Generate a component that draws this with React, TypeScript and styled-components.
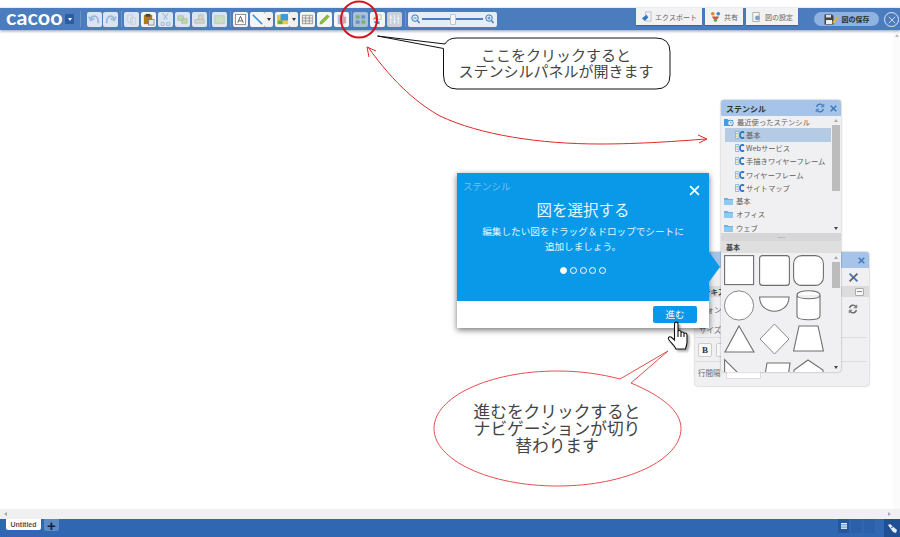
import styled, { createGlobalStyle } from 'styled-components'

const GlobalStyle = createGlobalStyle`
  html, body {
    margin: 0;
    padding: 0;
    background: #fff;
    font-family: 'Noto Sans CJK JP', 'Noto Sans', sans-serif;
  }
`

type GlyphName =
  | 'undo' | 'redo' | 'copy' | 'paste' | 'cut' | 'group' | 'ungroup' | 'frame'
  | 'text' | 'line' | 'image' | 'table' | 'pencil' | 'book' | 'stencil' | 'layers' | 'align'

const Glyph = ({ name }: { name: GlyphName }) => {
  const shapes: Record<GlyphName, React.ReactNode> = {
    undo: <path d="M3 7 C4 2 10 2 11 8 V11 M1 4 L3 8 L7 6" fill="none" stroke="#7fa3d3" strokeWidth="1.8" />,
    redo: <path d="M11 7 C10 2 4 2 3 8 V11 M13 4 L11 8 L7 6" fill="none" stroke="#7fa3d3" strokeWidth="1.8" />,
    copy: <path d="M3 2 H8 V10 H3 Z M6 5 H11 V12 H6 Z" fill="#e6eaf0" stroke="#b8c4d4" />,
    paste: (
      <>
        <rect x="2" y="2" width="9" height="10" fill="#b07a1a" />
        <rect x="4" y="1" width="5" height="3" fill="#444" />
        <rect x="7" y="7" width="6" height="6" fill="#dfe6ee" stroke="#667" strokeWidth=".7" />
      </>
    ),
    cut: <path d="M4 1 L9 8 M10 1 L5 8 M4 11 a1.8 1.8 0 1 0 .1 0 M10 11 a1.8 1.8 0 1 0 .1 0" transform="translate(0 -1)" fill="none" stroke="#8fa7c8" strokeWidth="1.2" />,
    group: <path d="M2 3 H8 V8 H2 Z M6 6 H12 V11 H6 Z" fill="#b5d09a" stroke="#9db98a" />,
    ungroup: <path d="M6 2 H11 V7 H6 Z M2 7 H12 V11 H2 Z" fill="#cfcdb8" stroke="#b3b19c" />,
    frame: <rect x="2" y="3" width="10" height="8" fill="#c6dcae" stroke="#a9c090" />,
    text: (
      <>
        <rect x="1.5" y="1.5" width="11" height="11" fill="#fff" stroke="#888" />
        <path d="M4 10.5 L7 3.5 L10 10.5 M5 8.5 H9" fill="none" stroke="#555" />
      </>
    ),
    line: <path d="M2 2 L12 12" stroke="#2f8fdc" strokeWidth="1.6" />,
    image: (
      <>
        <rect x="1" y="2" width="12" height="10" fill="#f2c544" />
        <rect x="5" y="1" width="8" height="7" fill="#3f9ad8" />
        <rect x="2" y="8" width="5" height="4" fill="#65b04a" />
      </>
    ),
    table: <path d="M1.5 2.5 H12.5 V11.5 H1.5 Z M1.5 5.5 H12.5 M1.5 8.5 H12.5 M5 2.5 V11.5 M9 2.5 V11.5" fill="#eee" stroke="#8a8a80" strokeWidth=".8" />,
    pencil: <path d="M2 12 L3 9 L10 2 L12 4 L5 11 Z" fill="#8cc03c" stroke="#6c9c28" strokeWidth=".7" />,
    book: (
      <>
        <rect x="3" y="2" width="7" height="10" fill="#a9c0e0" />
        <rect x="7" y="4" width="5" height="7" fill="#dca6a6" />
      </>
    ),
    stencil: (
      <>
        <rect x="2" y="2.5" width="4" height="3.5" fill="#7fae62" />
        <rect x="8" y="2.5" width="4" height="3.5" fill="#5d93c8" />
        <rect x="2" y="8" width="4" height="3.5" fill="#5d93c8" />
        <rect x="8" y="8" width="4" height="3.5" fill="#7fae62" />
      </>
    ),
    layers: (
      <>
        <path d="M5 2 H11 V7 H5 Z" fill="#f4f4f4" stroke="#aab" strokeWidth=".7" />
        <path d="M2 7 C3 4 5 4 7 4 V7 Z" fill="#e58a2e" />
        <path d="M3 9 C4 12 7 12 9 12 V9 Z" fill="#3d87cc" />
      </>
    ),
    align: <path d="M3 2 V12 M7 2 V12 M11 2 V12 M1.5 5 H4.5 M5.5 9 H8.5 M9.5 6 H12.5" stroke="#f2f4f7" strokeWidth="1" />,
  }
  return (
    <svg width="13" height="13" viewBox="0 0 14 14">
      {shapes[name]}
    </svg>
  )
}

const Page = styled.div`
  position: relative;
  width: 900px;
  height: 537px;
  overflow: hidden;
  display: flex;
  flex-direction: column;
`

const Toolbar = styled.header`
  margin-top: 8px;
  height: 22px;
  flex: none;
  display: flex;
  align-items: center;
  padding: 0 1px 0 6px;
  background: #4a7cbe;
  box-shadow: 0 1px 3px rgba(40, 70, 120, 0.55);
  position: relative;
`

const Logo = styled.span`
  width: 57px;
  flex: none;
  color: #fff;
  font-family: Lato, sans-serif;
  font-weight: 700;
  font-size: 21.5px;
  line-height: 22px;
  letter-spacing: 0.1px;
  position: relative;
  top: -2px;
`

const LogoMenu = styled.button`
  width: 9px;
  height: 10px;
  margin: 0 0 0 2px;
  padding: 0;
  border: 0;
  border-radius: 1px;
  background: #2a5da6;
  display: flex;
  align-items: center;
  justify-content: center;
  &::after {
    content: '';
    border: 2px solid transparent;
    border-top: 3px solid #fff;
    border-bottom: 0;
  }
`

const Sep = styled.i<{ $w: number }>`
  width: 1px;
  height: 16px;
  background: #6b94cb;
  margin: 0 ${(p) => (p.$w - 1) / 2}px;
`

const ToolGroup = styled.div<{ $gap: number }>`
  display: flex;
  gap: ${(p) => p.$gap}px;
`

const Tool = styled.button<{ $state?: 'dim' | 'on' | 'active' | 'off' }>`
  width: 15px;
  height: 15px;
  flex: none;
  padding: 0;
  border: 0;
  border-radius: 2px;
  display: flex;
  align-items: center;
  justify-content: center;
  background: ${(p) =>
    p.$state === 'active'
      ? '#a9bfd9'
      : p.$state === 'off'
        ? '#c8d0dc'
        : p.$state === 'on'
          ? '#f5f5f5'
          : '#dae5f3'};
  svg {
    opacity: ${(p) => (p.$state === 'on' || p.$state === 'active' || p.$state === 'off' ? 1 : 0.7)};
  }
`

const Split = styled.div`
  display: flex;
`

const DropArrow = styled.button`
  width: 8px;
  height: 15px;
  flex: none;
  padding: 0;
  border: 0;
  border-radius: 0 2px 2px 0;
  background: #f0f0f0;
  display: flex;
  align-items: center;
  justify-content: center;
  &::after {
    content: '';
    border: 2.5px solid transparent;
    border-top: 3px solid #333;
    border-bottom: 0;
  }
`

const ZoomBox = styled.div`
  width: 89px;
  height: 15px;
  flex: none;
  border-radius: 2px;
  background: #e6edf6;
  display: flex;
  align-items: center;
  justify-content: space-between;
  padding: 0 3px;
  box-sizing: border-box;
`

const ZoomTrack = styled.div`
  flex: 1;
  height: 2px;
  margin: 0 2px;
  background: #4a7cbe;
  display: flex;
  align-items: center;
  justify-content: center;
  &::after {
    content: '';
    width: 4px;
    height: 9px;
    background: #f4f6f8;
    border: 1px solid #b7c5d8;
    border-radius: 1px;
    flex: none;
  }
`

const RightTools = styled.div`
  margin-left: auto;
  display: flex;
  align-items: flex-start;
  height: 100%;
`

const TopTab = styled.div<{ $w: number }>`
  width: ${(p) => p.$w}px;
  height: 17px;
  margin-right: 3px;
  background: #f2f2f2;
  color: #666;
  font-size: 7px;
  display: flex;
  align-items: center;
  justify-content: center;
  gap: 3px;
  box-shadow: 0 1px 1px rgba(0, 0, 0, 0.2);
`

const SaveButton = styled.button`
  width: 65px;
  height: 14px;
  margin: 4px 0 0 13px;
  padding: 0;
  border: 0;
  border-radius: 7px;
  background: #8fb2e0;
  color: #2d2d2d;
  font: 700 7px 'Noto Sans CJK JP', sans-serif;
  display: flex;
  align-items: center;
  justify-content: center;
  gap: 3px;
`

const CloseRound = styled.button`
  width: 15px;
  height: 15px;
  margin: 4px 0 0 5px;
  padding: 0;
  border: 1px solid #e2ebf6;
  border-radius: 50%;
  background: transparent;
  display: flex;
  align-items: center;
  justify-content: center;
`

const CanvasRow = styled.main`
  flex: 1;
  display: flex;
  min-height: 0;
`

const Canvas = styled.div`
  flex: 1;
  background: #fff;
`

const VScroll = styled.div`
  width: 7px;
  background: #fbfbfb;
  display: flex;
  justify-content: center;
  padding-top: 4px;
  box-sizing: border-box;
  &::before {
    content: '';
    height: 0;
    border: 2px solid transparent;
    border-bottom: 3px solid #bbb;
    border-top: 0;
  }
`

const HScroll = styled.div`
  height: 10px;
  flex: none;
  background: #f0f0f0;
  display: flex;
  align-items: center;
  justify-content: space-between;
  padding: 0 9px 0 4px;
  &::before {
    content: '';
    border: 2.5px solid transparent;
    border-right: 3px solid #aaa;
    border-left: 0;
  }
  &::after {
    content: '';
    border: 2.5px solid transparent;
    border-left: 3px solid #aaa;
    border-right: 0;
  }
`

const BottomBar = styled.footer`
  height: 18px;
  flex: none;
  background: #2f67b2;
  display: flex;
  align-items: flex-start;
  padding-left: 6px;
`

const SheetTab = styled.div`
  width: 35px;
  height: 11px;
  background: #fff;
  border-radius: 0 0 2px 2px;
  color: #555;
  font: 700 7px 'Liberation Sans', sans-serif;
  display: flex;
  align-items: center;
  justify-content: center;
`

const AddSheet = styled.button`
  width: 15px;
  height: 12px;
  margin-left: 3px;
  padding: 0;
  border: 0;
  border-radius: 0 0 2px 2px;
  background: #5d89c4;
  color: #16233a;
  font: 700 15px/11px 'Liberation Sans', sans-serif;
`

const ViewButtons = styled.div`
  margin-left: auto;
  display: flex;
  gap: 2px;
`

const ViewButton = styled.div<{ $on?: boolean }>`
  width: 11px;
  height: 14px;
  background: ${(p) => (p.$on ? '#26579c' : '#2c61aa')};
  display: flex;
  align-items: center;
  justify-content: center;
`

const CornerButton = styled.div`
  width: 16px;
  height: 18px;
  margin-left: 9px;
  background: #1f4f94;
  display: flex;
  align-items: center;
  justify-content: center;
`

const Annotations = styled.svg`
  position: absolute;
  left: 0;
  top: 0;
  z-index: 5;
  pointer-events: none;
`

const Callout = styled.div<{ $x: number; $y: number; $w: number; $size: number; $line: number }>`
  position: absolute;
  z-index: 6;
  left: ${(p) => p.$x}px;
  top: ${(p) => p.$y}px;
  width: ${(p) => p.$w}px;
  text-align: center;
  color: #444;
  font-size: ${(p) => p.$size}px;
  line-height: ${(p) => p.$line}px;
`

const FloatPanel = styled.section`
  position: absolute;
  box-sizing: border-box;
  background: #f0f0f2;
  border-radius: 3px;
  box-shadow: 0 0 2px rgba(0, 0, 0, 0.4);
`

const PropsPanel = styled(FloatPanel)`
  left: 695px;
  top: 252px;
  width: 174px;
  height: 134px;
  z-index: 1;
  overflow: hidden;
`

const StencilPanel = styled(FloatPanel)`
  left: 721px;
  top: 100px;
  width: 120px;
  height: 272px;
  z-index: 2;
  overflow: hidden;
`

const PanelHead = styled.div`
  height: 16px;
  background: #a6c4ea;
  display: flex;
  align-items: center;
  justify-content: flex-end;
  gap: 5px;
  padding: 0 4px 0 5px;
  color: #333;
  font-weight: 700;
  font-size: 8px;
`

const PanelTitle = styled.span`
  margin-right: auto;
`

const TreeArea = styled.div`
  height: 117px;
  display: flex;
  overflow: hidden;
`

const Tree = styled.ul`
  flex: 1;
  margin: -1px 0 0;
  padding: 0 0 0 3px;
  list-style: none;
  min-width: 0;
`

const TreeRow = styled.li<{ $level?: number; $on?: boolean }>`
  height: 13.25px;
  padding-left: ${(p) => (p.$level ? 10 : 0)}px;
  margin-left: ${(p) => (p.$level ? 1 : 0)}px;
  background: ${(p) => (p.$on ? '#b5cae3' : 'transparent')};
  color: #5c5c5c;
  font-size: 7.3px;
  white-space: nowrap;
  display: flex;
  align-items: center;
  gap: 1px;
`

const ScrollRail = styled.div`
  width: 10px;
  flex: none;
  display: flex;
  flex-direction: column;
  align-items: center;
  justify-content: space-between;
  padding: 3px 0;
  box-sizing: border-box;
  &::before {
    content: '';
    border: 2px solid transparent;
    border-bottom: 3px solid #aaa;
    border-top: 0;
  }
  &::after {
    content: '';
    border: 2px solid transparent;
    border-top: 3px solid #444;
    border-bottom: 0;
  }
`

const ScrollThumb = styled.div<{ $h: number }>`
  width: 8px;
  height: ${(p) => p.$h}px;
  background: #bcbcbc;
  margin-bottom: auto;
  margin-top: 3px;
`

const Splitter = styled.div`
  height: 8px;
  background: #d6d6d8;
  display: flex;
  align-items: center;
  justify-content: center;
  &::after {
    content: '';
    width: 8px;
    height: 1px;
    background: #bbb;
  }
`

const ShapeHead = styled.div`
  height: 12px;
  background: #dfdfdf;
  color: #444;
  font-size: 7px;
  font-weight: 700;
  padding-left: 5px;
  line-height: 12px;
`

const ShapeArea = styled.div`
  height: 119px;
  display: flex;
  overflow: hidden;
`

const ShapeGrid = styled.div`
  flex: 1;
  display: grid;
  grid-template-columns: repeat(3, 31px);
  grid-auto-rows: 31px;
  column-gap: 3.5px;
  row-gap: 3.5px;
  padding: 2px 0 0 3px;
  height: 140px;
`

const PropsTool = styled.div`
  height: 18px;
  display: flex;
  justify-content: flex-end;
  align-items: center;
  padding-right: 10px;
`

const SectionBar = styled.div`
  height: 11px;
  background: #dcdcdc;
  font-size: 7.5px;
  font-weight: 700;
  color: #444;
  padding-left: 8px;
  line-height: 11px;
  display: flex;
  align-items: center;
  justify-content: space-between;
  padding-right: 5px;
`

const MiniBox = styled.span`
  width: 9px;
  height: 8px;
  background: #f7f7f7;
  border: 1px solid #aaa;
  box-sizing: border-box;
  border-radius: 1px;
  display: flex;
  align-items: center;
  justify-content: center;
  &::after {
    content: '';
    width: 5px;
    height: 1px;
    background: #888;
  }
`

const PropLine = styled.div<{ $h: number; $rule?: boolean }>`
  height: ${(p) => p.$h}px;
  display: flex;
  align-items: center;
  justify-content: space-between;
  padding: 0 8px 0 3px;
  color: #666;
  font-size: 7.5px;
  margin: 0 3px 0 0;
  border-bottom: ${(p) => (p.$rule ? '1px solid #ddd' : '0')};
  box-sizing: border-box;
`

const PropLabelOffset = styled.span`
  padding-left: 1px;
`

const StyleButtons = styled.div`
  display: flex;
  gap: 4px;
`

const StyleButton = styled.span`
  width: 14px;
  height: 14px;
  background: #f8f8f8;
  border: 1px solid #ccc;
  border-radius: 2px;
  box-sizing: border-box;
  color: #333;
  font: 700 9px/12px 'Liberation Serif', serif;
  text-align: center;
`

const SpacingInput = styled.span`
  width: 35px;
  height: 14px;
  margin-right: auto;
  margin-left: 5px;
  background: #fff;
  border: 1px solid #ddd;
  box-sizing: border-box;
`

const Popup = styled.section`
  position: absolute;
  z-index: 3;
  left: 457px;
  top: 173px;
  width: 252px;
  height: 155px;
  background: #fff;
  box-shadow: 0 2px 6px rgba(0, 0, 0, 0.55);
  display: flex;
  flex-direction: column;
`

const PopupBody = styled.div`
  position: relative;
  height: 128px;
  flex: none;
  background: #0a99e8;
  color: #e6f5ff;
  text-align: center;
  box-sizing: border-box;
  padding: 6px 6px 0;
  &::after {
    content: '';
    position: absolute;
    left: 100%;
    top: 79px;
    border-style: solid;
    border-width: 15px 0 15px 11px;
    border-color: transparent transparent transparent #0a99e8;
  }
`

const PopupLabel = styled.div`
  text-align: left;
  color: rgba(255, 255, 255, 0.42);
  font-size: 9.5px;
  line-height: 14px;
`

const PopupClose = styled.button`
  position: absolute;
  right: 8px;
  top: 11px;
  width: 14px;
  height: 14px;
  padding: 0;
  border: 0;
  background: transparent;
`

const PopupTitle = styled.h2`
  margin: 5px 0 0;
  font-size: 15.5px;
  font-weight: 400;
  line-height: 22px;
`

const PopupText = styled.p`
  margin: 4px 0 0;
  font-size: 9.6px;
  line-height: 15px;
`

const Dots = styled.div`
  display: flex;
  justify-content: center;
  gap: 2.6px;
  margin-top: 13px;
`

const Dot = styled.span<{ $on?: boolean }>`
  width: 7px;
  height: 7px;
  box-sizing: border-box;
  border-radius: 50%;
  border: 1px solid #fff;
  background: ${(p) => (p.$on ? '#fff' : 'transparent')};
`

const PopupFoot = styled.div`
  flex: 1;
  display: flex;
  justify-content: flex-end;
  align-items: center;
  padding: 0 12px 1px 0;
`

const NextButton = styled.button`
  width: 44px;
  height: 17px;
  padding: 0;
  border: 0;
  border-radius: 2px;
  background: #0a99e8;
  color: #fff;
  font: 400 9.5px 'Noto Sans CJK JP', sans-serif;
`

const HandCursor = styled.svg`
  position: absolute;
  z-index: 7;
  left: 666px;
  top: 321px;
  filter: drop-shadow(2px 2px 1px rgba(0, 0, 0, 0.35));
`

const RefreshIcon = ({ color = '#4a7cbe' }: { color?: string }) => (
  <svg width="10" height="10" viewBox="0 0 12 12" fill="none" stroke={color} strokeWidth="1.6">
    <path d="M2 5 A4 4 0 0 1 9.5 3.5 M10 7 A4 4 0 0 1 2.5 8.5" />
    <path d="M10.5 1 V4.5 H7 M1.5 11 V7.5 H5" strokeWidth="1.1" />
  </svg>
)

const CrossIcon = ({ size = 8, color = '#3f78bd', width = 2.2 }: { size?: number; color?: string; width?: number }) => (
  <svg width={size} height={size} viewBox="0 0 10 10" stroke={color} strokeWidth={width}>
    <path d="M1 1 L9 9 M9 1 L1 9" />
  </svg>
)

const FolderIcon = () => (
  <svg width="9" height="8" viewBox="0 0 9 8" style={{ marginRight: 2 }}>
    <path d="M0 1 H3.5 L4.5 2 H9 V8 H0 Z" fill="#6cb2e6" />
    <rect y="3" width="9" height="5" fill="#8ccaf2" />
  </svg>
)

const RecentIcon = () => (
  <svg width="10" height="8" viewBox="0 0 10 8" style={{ marginRight: 2 }}>
    <path d="M0 1 H3.5 L4.5 2 H9 V8 H0 Z" fill="#4a9be0" />
    <circle cx="6.5" cy="5" r="2.8" fill="#e8f2fb" stroke="#3c7fc0" strokeWidth=".7" />
    <path d="M6.5 3.5 V5 H8" stroke="#3c7fc0" strokeWidth=".6" fill="none" />
  </svg>
)

const StencilIcon = () => (
  <svg width="10" height="8" viewBox="0 0 10 8">
    <path d="M.5 .5 H4 V7.5 H.5 Z" fill="#eaf3fb" stroke="#6aa6d8" strokeWidth=".7" />
    <rect x="1.5" y="2" width="1.2" height="1.2" fill="#5ba34a" />
    <rect x="1.5" y="4.6" width="1.2" height="1.2" fill="#e0a030" />
    <path d="M9 1.6 C7 -.2 5 1.4 5 4 C5 6.6 7 8.2 9 6.4" fill="none" stroke="#1f6fc0" strokeWidth="1.6" />
  </svg>
)

const Magnifier = ({ plus }: { plus?: boolean }) => (
  <svg width="9" height="10" viewBox="0 0 10 11" fill="none" stroke="#3f78b8" strokeWidth="1.1" style={{ flex: 'none' }}>
    <circle cx="4.5" cy="4.5" r="3.6" fill="#dcebf8" />
    <path d="M7 7 L9.5 10" strokeWidth="1.6" />
    <path d={plus ? 'M2.8 4.5 H6.2 M4.5 2.8 V6.2' : 'M2.8 4.5 H6.2'} strokeWidth=".9" />
  </svg>
)

const stroke = { fill: '#fff', stroke: '#6e6e6e', strokeWidth: 1.1 }

const shapeList = [
  <rect x=".6" y=".6" width="29" height="29" {...stroke} />,
  <rect x=".6" y=".6" width="29.8" height="29.8" rx="3" {...stroke} />,
  <rect x=".6" y=".6" width="29.8" height="29.8" rx="8" {...stroke} />,
  <circle cx="15" cy="15.5" r="14.6" fill="#fff" stroke="#888" />,
  <path d="M.6 7 H30 C30 26 .6 26 .6 7 Z" {...stroke} />,
  <path d="M4 5 C4 -.6 27 -.6 27 5 V26 C27 31 4 31 4 26 Z M4 5 C4 10 27 10 27 5" {...stroke} />,
  <path d="M15 2 L30 28 H1 Z" {...stroke} />,
  <path d="M15.5 0 L30 15 L15.5 30 L1 15 Z" fill="#fff" stroke="#888" />,
  <path d="M6 2 H25 L30.4 27 H.6 Z" {...stroke} />,
  <path d="M.6 .6 L14 14 V40 H.6 Z" {...stroke} />,
  <path d="M8 4 H31 L26 40 H2 Z" {...stroke} />,
  <path d="M15 1 L30 11 V40 H1 V11 Z" {...stroke} />,
]

const App = () => {
  return (
    <Page>
      <GlobalStyle />
      <Toolbar>
        <Logo>cacoo</Logo>
        <LogoMenu aria-label="menu" />
        <Sep $w={13} />
        <ToolGroup $gap={1}>
          <Tool><Glyph name="undo" /></Tool>
          <Tool><Glyph name="redo" /></Tool>
        </ToolGroup>
        <Sep $w={6} />
        <ToolGroup $gap={2}>
          <Tool><Glyph name="copy" /></Tool>
          <Tool $state="on"><Glyph name="paste" /></Tool>
          <Tool><Glyph name="cut" /></Tool>
          <Tool><Glyph name="group" /></Tool>
          <Tool><Glyph name="ungroup" /></Tool>
        </ToolGroup>
        <Sep $w={5} />
        <Tool><Glyph name="frame" /></Tool>
        <Sep $w={6} />
        <ToolGroup $gap={2}>
          <Tool $state="on"><Glyph name="text" /></Tool>
          <Split>
            <Tool $state="on"><Glyph name="line" /></Tool>
            <DropArrow />
          </Split>
          <Split>
            <Tool $state="on"><Glyph name="image" /></Tool>
            <DropArrow />
          </Split>
          <Tool $state="on"><Glyph name="table" /></Tool>
          <Tool $state="on"><Glyph name="pencil" /></Tool>
          <Tool $state="on"><Glyph name="book" /></Tool>
        </ToolGroup>
        <Sep $w={4} />
        <ToolGroup $gap={2}>
          <Tool $state="active"><Glyph name="stencil" /></Tool>
          <Tool $state="on"><Glyph name="layers" /></Tool>
          <Tool $state="off"><Glyph name="align" /></Tool>
        </ToolGroup>
        <Sep $w={6} />
        <ZoomBox>
          <Magnifier />
          <ZoomTrack />
          <Magnifier plus />
        </ZoomBox>
        <RightTools>
          <TopTab $w={66}>
            <svg width="11" height="11" viewBox="0 0 12 12">
              <path d="M5 1 H11 V11 H5 Z" fill="#eef2f7" stroke="#99a" strokeWidth=".6" />
              <path d="M1 8 L6 4 L8 7 L4 11 Z" fill="#2f7ac4" />
            </svg>
            エクスポート
          </TopTab>
          <TopTab $w={38}>
            <svg width="11" height="11" viewBox="0 0 12 12">
              <circle cx="3" cy="3" r="2" fill="#e0872a" />
              <circle cx="9" cy="3" r="2" fill="#3d87cc" />
              <path d="M2 6 H10 L8 9 H4 Z" fill="#d8503c" />
              <circle cx="6" cy="10" r="1.8" fill="#5ba34a" />
            </svg>
            共有
          </TopTab>
          <TopTab $w={52}>
            <svg width="11" height="12" viewBox="0 0 12 12">
              <path d="M2 1 H9 V11 H2 Z" fill="#f6f6f6" stroke="#888" strokeWidth=".7" />
              <circle cx="7" cy="7" r="2.6" fill="#7f9fc4" />
            </svg>
            図の設定
          </TopTab>
          <SaveButton>
            <svg width="15" height="11" viewBox="0 0 15 11">
              <path d="M.5 .5 H8 L9.5 2 V10.5 H.5 Z" fill="#444" />
              <rect x="2" y="1" width="5" height="2.5" fill="#ddd" />
              <rect x="2" y="6" width="6" height="4" fill="#eee" />
              <path d="M8 9.5 L9 7 L13.5 2.5 L14.8 3.8 L10.5 8.5 Z" fill="#e8b32a" />
            </svg>
            図の保存
          </SaveButton>
          <CloseRound aria-label="close">
            <CrossIcon size={8} color="#e8f0f8" width={1} />
          </CloseRound>
        </RightTools>
      </Toolbar>
      <CanvasRow>
        <Canvas />
        <VScroll />
      </CanvasRow>
      <HScroll />
      <BottomBar>
        <SheetTab>Untitled</SheetTab>
        <AddSheet>+</AddSheet>
        <ViewButtons>
          <ViewButton $on>
            <svg width="6" height="6" viewBox="0 0 6 6" fill="#e8eef6">
              <rect width="6" height="1.5" />
              <rect y="2.2" width="6" height="1.5" />
              <rect y="4.4" width="6" height="1.5" />
            </svg>
          </ViewButton>
          <ViewButton />
          <ViewButton />
        </ViewButtons>
        <CornerButton>
          <svg width="9" height="9" viewBox="0 0 9 9">
            <path d="M0 1 L2 0 L9 6 L8 9 L5 8 Z" fill="#e8eef6" />
            <path d="M3 4 L6 2" stroke="#1f4f94" />
          </svg>
        </CornerButton>
      </BottomBar>

      <PropsPanel>
        <PanelHead>
          <CrossIcon size={7} />
        </PanelHead>
        <PropsTool>
          <svg width="11" height="11" viewBox="0 0 14 14">
            <path d="M2 2 L12 12" stroke="#3f78bd" strokeWidth="2.4" />
            <path d="M12 2 L2 12" stroke="#666" strokeWidth="2.4" />
          </svg>
        </PropsTool>
        <SectionBar>
          テキスト
          <MiniBox />
        </SectionBar>
        <PropLine $h={24}>
          <PropLabelOffset>フォント</PropLabelOffset>
          <RefreshIcon color="#666" />
        </PropLine>
        <PropLine $h={17} $rule>
          <PropLabelOffset>サイズ</PropLabelOffset>
        </PropLine>
        <PropLine $h={24} $rule>
          <StyleButtons>
            <StyleButton>B</StyleButton>
            <StyleButton />
          </StyleButtons>
        </PropLine>
        <PropLine $h={20}>
          行間隔
          <SpacingInput />
        </PropLine>
      </PropsPanel>

      <StencilPanel>
        <PanelHead>
          <PanelTitle>ステンシル</PanelTitle>
          <RefreshIcon />
          <CrossIcon size={7} />
        </PanelHead>
        <TreeArea>
          <Tree>
            <TreeRow><RecentIcon />最近使ったステンシル</TreeRow>
            <TreeRow $level={1} $on><StencilIcon />基本</TreeRow>
            <TreeRow $level={1}><StencilIcon />Webサービス</TreeRow>
            <TreeRow $level={1}><StencilIcon />手描きワイヤーフレーム</TreeRow>
            <TreeRow $level={1}><StencilIcon />ワイヤーフレーム</TreeRow>
            <TreeRow $level={1}><StencilIcon />サイトマップ</TreeRow>
            <TreeRow><FolderIcon />基本</TreeRow>
            <TreeRow><FolderIcon />オフィス</TreeRow>
            <TreeRow><FolderIcon />ウェブ</TreeRow>
          </Tree>
          <ScrollRail>
            <ScrollThumb $h={66} />
          </ScrollRail>
        </TreeArea>
        <Splitter />
        <ShapeHead>基本</ShapeHead>
        <ShapeArea>
          <ShapeGrid>
            {shapeList.map((shape, i) => (
              <svg key={i} width="31" height="31" viewBox="0 0 31 31" style={{ overflow: 'visible' }}>
                {shape}
              </svg>
            ))}
          </ShapeGrid>
          <ScrollRail>
            <ScrollThumb $h={26} />
          </ScrollRail>
        </ShapeArea>
      </StencilPanel>

      <Popup>
        <PopupBody>
          <PopupLabel>ステンシル</PopupLabel>
          <PopupClose aria-label="close">
            <CrossIcon size={11} color="#fff" width={1.6} />
          </PopupClose>
          <PopupTitle>図を選択する</PopupTitle>
          <PopupText>
            編集したい図をドラッグ＆ドロップでシートに
            <br />
            追加しましょう。
          </PopupText>
          <Dots>
            <Dot $on />
            <Dot />
            <Dot />
            <Dot />
            <Dot />
          </Dots>
        </PopupBody>
        <PopupFoot>
          <NextButton>進む</NextButton>
        </PopupFoot>
      </Popup>

      <Annotations width="900" height="537" viewBox="0 0 900 537" fill="none">
        <circle cx="359" cy="19.5" r="18" stroke="#d4141c" strokeWidth="2" />
        <path
          d="M457 38 H656 Q670 38 670 52 V75 Q670 89 656 89 H457 Q443.5 89 443.5 75 V48.5 L377.5 36 L445 44 Q448 38 457 38 Z"
          fill="#fff"
          stroke="#111"
        />
        <path
          d="M368 47 C395 85 420 105 440 116 C480 135 540 144 600 144 C640 144 680 141 706 139"
          stroke="#e02828"
        />
        <path d="M369 57 L367 47 L376 51 M698 135 L707 139 L699 143" stroke="#e02828" />
        <path
          d="M620 379 L668 351 L631 383 C662 396 681 411 681 428.5 C681 460 626 486 557.5 486 C489 486 434 460 434 428.5 C434 397 489 371 557.5 371 C580 371 601 374 620 379 Z"
          fill="#fff"
          stroke="#e25050"
        />
      </Annotations>
      <Callout $x={443} $y={47} $w={226} $size={15} $line={16}>
        ここをクリックすると
        <br />
        ステンシルパネルが開きます
      </Callout>
      <Callout $x={460} $y={403} $w={194} $size={16.7} $line={17}>
        進むをクリックすると
        <br />
        ナビゲーションが切り
        <br />
        替わります
      </Callout>

      <HandCursor width="26" height="30" viewBox="0 0 26 30">
        <path
          d="M8.5 3 C8.5 .5 12 .5 12 3 V11 C12 9 15 9 15 11 V12 C15 10.5 18 10.5 18 12.5 V13 C18 11.5 21 11.5 21 14 V21 C21 24 20 25 19.5 28 H10 C9 25 6 23 3 19 C1.5 17 3 15 5 16 L8.5 19 Z M12 11 V16 M15 12 V16 M18 13 V16"
          fill="#fff"
          stroke="#111"
          strokeWidth="1.1"
        />
      </HandCursor>
    </Page>
  )
}

export default App
